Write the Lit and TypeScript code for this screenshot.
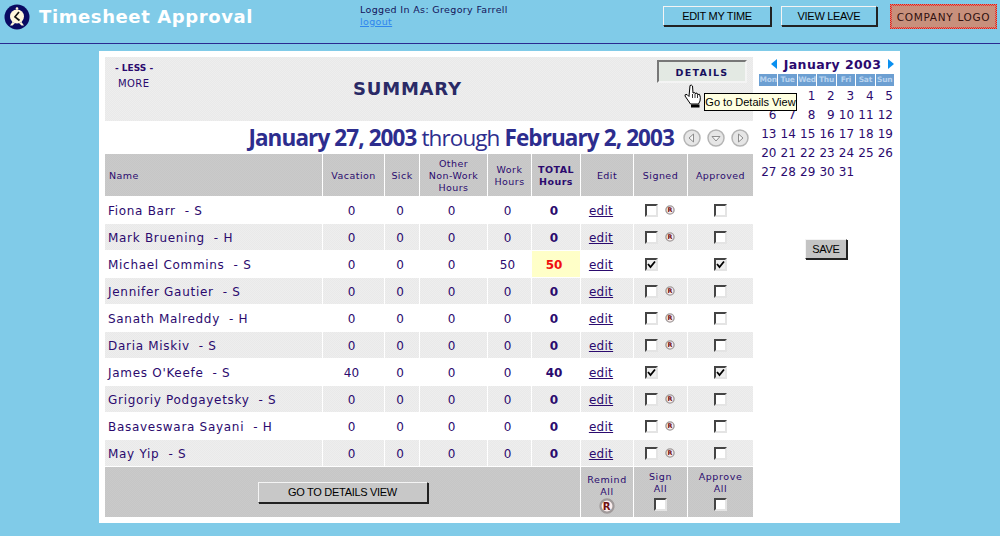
import { LitElement, html, css, svg } from "lit";
import { customElement } from "lit/decorators.js";

const rows = [
  { name: "Fiona Barr", t: "S", other: 0, work: 0, vac: 0, signed: false },
  { name: "Mark Bruening", t: "H", other: 0, work: 0, vac: 0, signed: false },
  { name: "Michael Commins", t: "S", other: 0, work: 50, vac: 0, signed: true, over: true },
  { name: "Jennifer Gautier", t: "S", other: 0, work: 0, vac: 0, signed: false },
  { name: "Sanath Malreddy", t: "H", other: 0, work: 0, vac: 0, signed: false },
  { name: "Daria Miskiv", t: "S", other: 0, work: 0, vac: 0, signed: false },
  { name: "James O'Keefe", t: "S", other: 0, work: 0, vac: 40, signed: true },
  { name: "Grigoriy Podgayetsky", t: "S", other: 0, work: 0, vac: 0, signed: false },
  { name: "Basaveswara Sayani", t: "H", other: 0, work: 0, vac: 0, signed: false },
  { name: "May Yip", t: "S", other: 0, work: 0, vac: 0, signed: false },
];

const weekdays = ["Mon", "Tue", "Wed", "Thu", "Fri", "Sat", "Sun"];
const days = [0, 0, ...Array.from({ length: 31 }, (_, i) => i + 1)];

const clock = svg`<svg width="26" height="26" viewBox="0 0 26 26">
  <circle cx="13" cy="13" r="12.500" fill="#0a0a62"/>
  <circle cx="13" cy="4.500" r="1.300" fill="#fff6dc"/>
  <path d="M8.500 18 L6 21.500 h2.500 L11 19z M17.500 18 L20 21.500 h-2.500 L15 19z" fill="#fff6dc"/>
  <circle cx="13" cy="12.500" r="7" fill="#fff6dc"/>
  <path d="M15 8 l-4 4.800 l4.500 3.700" fill="none" stroke="#111" stroke-width="1.700"/>
</svg>`;

const hand = svg`<svg width="20" height="24" viewBox="0 0 20 24">
  <path d="M7 1.500 q1.500 -1 2.500 .5 l.5 7 l1.500 -.5 l.5 1 l2 -.5 l.5 1.500 l2 -.2 q1.500 3 .5 6.700 l-1.500 3 h-8 l-5.500 -8 q-.5 -2 2 -1.500 l2 2z" fill="#fff" stroke="#000" stroke-width="1"/>
  <path d="M9.500 10v4M12 10v4M14.500 11v3" stroke="#000" stroke-width=".8"/>
  <rect x="8" y="20.500" width="8.500" height="3" fill="#000"/>
</svg>`;

const check = svg`<svg class="tick" width="9" height="9" viewBox="0 0 9 9"><path d="M1 4 l2.500 3 L8 1.500" fill="none" stroke="#000" stroke-width="1.800"/></svg>`;

@customElement("app-root")
export class AppRoot extends LitElement {
  static styles = css`
    :host {
      display: block;
      width: 1000px;
      height: 536px;
      overflow: hidden;
      background: #80cbe8;
      font-family: "DejaVu Sans", Verdana, sans-serif;
      color: #2b0a6e;
    }
    * { box-sizing: border-box; }
    .top {
      display: flex;
      height: 44px;
      border-bottom: 1px solid #2a2a90;
      padding: 4px 1px 0 4px;
    }
    .logo { width: 26px; height: 26px; }
    .app-name {
      width: 321px;
      margin: 0 0 0 9px;
      color: #fff;
      font-size: 18px;
      font-weight: bold;
      line-height: 26px;
      letter-spacing: 0.6px;
    }
    .who {
      width: 303px;
      font-size: 9.5px;
      line-height: 12px;
      letter-spacing: 0.35px;
      color: #14145a;
    }
    .who a { display: block; color: #2f86ee; text-decoration: underline; }
    .btn {
      display: flex;
      align-items: center;
      justify-content: center;
      font-family: "Liberation Sans", Arial, sans-serif;
      font-size: 11px;
      letter-spacing: -0.3px;
      color: #000;
      background: #80cbe8;
      border: 1px solid;
      border-color: #f4f4f4 #222 #222 #f4f4f4;
      box-shadow: 1px 1px 0 #222;
    }
    .edit-time { width: 108px; height: 20px; margin: 2px 10px 0 0; }
    .view-leave { width: 96px; height: 20px; margin: 2px 13px 0 0; }
    .company {
      width: 107px;
      height: 25px;
      font-family: "DejaVu Sans", sans-serif;
      font-size: 10.5px;
      letter-spacing: 0.7px;
      color: #301010;
      background: #c8907c;
      border: 1px dotted #f01010;
      outline: 1px dotted #e83030;
      outline-offset: -2px;
      box-shadow: none;
    }
    .sheet {
      display: flex;
      gap: 6px;
      width: 801px;
      height: 472px;
      margin: 7px 0 0 99px;
      padding: 6px 0 0 6px;
      background: #fff;
    }
    .left { width: 648px; }
    .dither {
      background: repeating-conic-gradient(#e9e9e9 0 25%, #eeeeee 0 50%) 0 0 / 2px 2px;
    }
    .shade {
      background: repeating-conic-gradient(#c6c6c6 0 25%, #cacaca 0 50%) 0 0 / 2px 2px;
    }
    .summary {
      position: relative;
      display: grid;
      grid-template-columns: 252px 1fr 96px;
      height: 64px;
    }
    .modes {
      padding: 3px 0 0 10px;
      font-size: 10px;
      line-height: 16px;
    }
    .modes b { display: block; font-size: 9px; }
    .modes span { padding-left: 3px; letter-spacing: 0.4px; }
    h2 {
      margin: 22px 0 0 -4px;
      font-size: 18px;
      line-height: 20px;
      letter-spacing: 0.8px;
      color: #2a2a66;
    }
    .details {
      width: 90px;
      height: 23px;
      margin-top: 3px;
      padding-top: 2px;
      display: flex;
      align-items: center;
      justify-content: center;
      font-size: 9.5px;
      font-weight: bold;
      letter-spacing: 1.3px;
      color: #17105e;
      background: #e3e9e3;
      border: 2px solid;
      border-color: #777 #f4f4f4 #f4f4f4 #777;
    }
    .hand { position: absolute; left: 578px; top: 27px; }
    .tip {
      position: absolute;
      left: 599px;
      top: 36px;
      z-index: 2;
      width: 93px;
      height: 18px;
      border: 1px solid #000;
      background: #ffffe1;
      color: #000;
      font-family: "Liberation Sans", Arial, sans-serif;
      font-size: 11px;
      line-height: 16px;
      white-space: nowrap;
      text-align: center;
    }
    .range {
      display: flex;
      align-items: center;
      justify-content: flex-end;
      height: 33px;
      padding-right: 4px;
      gap: 9px;
    }
    .range p {
      margin: 0;
      font-family: "Open Sans", sans-serif;
      font-size: 22.5px;
      letter-spacing: -0.9px;
      white-space: nowrap;
      color: #2d2d8e;
    }
    .range b { font-weight: 700; }
    .nav { display: flex; gap: 6px; }
    .row {
      display: grid;
      grid-template-columns: 217px 61px 34px 67px 43px 48px 52px 53px 65px;
      column-gap: 1px;
      height: 26px;
      margin-bottom: 1px;
    }
    .row > div {
      display: flex;
      align-items: center;
      justify-content: center;
      padding: 2px 4px 0 0;
      font-size: 12px;
    }
    .row.head { height: 42px; }
    .row.head > div {
      padding: 2px 0 0;
      font-size: 9.5px;
      line-height: 12px;
      letter-spacing: 0.45px;
      text-align: center;
    }
    .row > .name { justify-content: flex-start; padding-left: 3px; white-space: pre; letter-spacing: 0.7px; }
    .row.head > .name { padding-left: 4px; letter-spacing: 0.45px; }
    .row .total { font-weight: bold; }
    .row .total.over { background: #ffffc8; color: #f01010; }
    .row > .edit { padding-right: 12px; }
    .row a { color: #2b0a6e; text-decoration: underline; font-size: 12px; letter-spacing: 0.3px; }
    .row > .signed { justify-content: flex-start; padding: 0 0 0 11px; gap: 7px; }
    .row > .approve { padding: 0; }
    .box {
      display: inline-flex;
      align-items: center;
      justify-content: center;
      width: 13px;
      height: 13px;
      background: #fff;
      border: 2px solid;
      border-color: #444 #e4e4e4 #e4e4e4 #444;
    }
    .box.on { background: #efefef; }
    .foot {
      display: grid;
      grid-template-columns: 475px 52px 53px 65px;
      column-gap: 1px;
      height: 50px;
    }
    .foot > div {
      display: flex;
      flex-direction: column;
      align-items: center;
      justify-content: center;
      font-size: 9.5px;
      line-height: 12px;
      letter-spacing: 0.6px;
      text-align: center;
    }
    .foot > .remind { padding-top: 3px; }
    .goto { width: 170px; height: 21px; background: #c8c8c8; }
    .foot .box { margin-top: 3px; }
    .foot > div:nth-child(n + 3) { padding-bottom: 2px; }
    .side { width: 136px; }
    .cal-title {
      display: flex;
      align-items: center;
      justify-content: space-between;
      width: 135px;
      height: 16px;
      margin-top: -1px;
      padding: 0 0 0 12px;
      font-size: 12.5px;
      font-weight: bold;
      letter-spacing: 0.4px;
      color: #2b0a6e;
      white-space: nowrap;
    }
    .arrow {
      width: 0;
      height: 0;
      border-top: 5px solid transparent;
      border-bottom: 5px solid transparent;
    }
    .arrow.prev { border-right: 6px solid #0a90f0; }
    .arrow.next { border-left: 6px solid #0a90f0; }
    .cal {
      display: grid;
      grid-template-columns: repeat(7, 1fr);
      column-gap: 1px;
      width: 135px;
      margin-top: 2px;
    }
    .cal .wd {
      height: 12px;
      margin-bottom: 1px;
      background: #6c9fd2;
      color: #b9d3ee;
      font-size: 7.5px;
      font-weight: bold;
      letter-spacing: -0.2px;
      line-height: 12px;
      text-align: center;
      white-space: nowrap;
    }
    .cal .d {
      height: 19px;
      padding-right: 1px;
      font-size: 12px;
      line-height: 19px;
      text-align: right;
    }
    .save {
      width: 42px;
      height: 20px;
      margin: 57px 0 0 46px;
      background: #c4c4c4;
    }
  `;

  remind(size: number) {
    return svg`<svg width=${size} height=${size} viewBox="0 0 11 11">
      <circle cx="5.500" cy="5.500" r="4.500" fill="#fbeeee" stroke="#a09a9a" stroke-width="1.500"/>
      <text x="5.500" y="8" text-anchor="middle" font-size="7" font-weight="bold" font-family="DejaVu Sans" fill="#701010">R</text>
    </svg>`;
  }

  navIcon(kind: string) {
    const d =
      kind === "prev" ? "M10.500 5 L6 9 L10.500 13z" :
      kind === "next" ? "M7.500 5 L12 9 L7.500 13z" :
      "M5 7.500 L9 12 L13 7.500z";
    return svg`<svg width="18" height="18" viewBox="0 0 18 18">
      <circle cx="9" cy="9" r="8" fill="#e6e6e6" stroke="#b4b4b4" stroke-width="1.500"/>
      <path d=${d} fill="#f6f6f6" stroke="#8c8c8c"/>
    </svg>`;
  }

  renderRow(r: (typeof rows)[number], i: number) {
    const cell = i % 2 ? "dither" : "";
    const total = r.vac + r.other + r.work;
    return html`<div class="row">
      <div class="name ${cell}">${r.name}  - ${r.t}</div>
      <div class=${cell}>${r.vac}</div>
      <div class=${cell}>0</div>
      <div class=${cell}>${r.other}</div>
      <div class=${cell}>${r.work}</div>
      <div class="total ${cell} ${r.over ? "over" : ""}">${total}</div>
      <div class="edit ${cell}"><a href="#">edit</a></div>
      <div class="signed ${cell}">
        <span class="box ${r.signed ? "on" : ""}">${r.signed ? check : ""}</span>
        ${r.signed ? "" : this.remind(10)}
      </div>
      <div class="approve ${cell}">
        <span class="box ${r.signed ? "on" : ""}">${r.signed ? check : ""}</span>
      </div>
    </div>`;
  }

  render() {
    return html`
      <header class="top">
        <div class="logo">${clock}</div>
        <h1 class="app-name">Timesheet Approval</h1>
        <div class="who">Logged In As: Gregory Farrell<a href="#">logout</a></div>
        <div class="btn edit-time">EDIT MY TIME</div>
        <div class="btn view-leave">VIEW LEAVE</div>
        <div class="btn company">COMPANY LOGO</div>
      </header>
      <div class="sheet">
        <div class="left">
          <div class="summary dither">
            <div class="modes"><b>- LESS -</b><span>MORE</span></div>
            <h2>SUMMARY</h2>
            <div class="details">DETAILS</div>
            <div class="hand">${hand}</div>
            <div class="tip">Go to Details View</div>
          </div>
          <div class="range">
            <p><b>January 27, 2003</b> through <b>February 2, 2003</b></p>
            <div class="nav">${this.navIcon("prev")}${this.navIcon("down")}${this.navIcon("next")}</div>
          </div>
          <div class="row head">
            <div class="name shade">Name</div>
            <div class="shade">Vacation</div>
            <div class="shade">Sick</div>
            <div class="shade">Other<br />Non-Work<br />Hours</div>
            <div class="shade">Work<br />Hours</div>
            <div class="shade"><b>TOTAL<br />Hours</b></div>
            <div class="shade">Edit</div>
            <div class="shade">Signed</div>
            <div class="shade">Approved</div>
          </div>
          ${rows.map((r, i) => this.renderRow(r, i))}
          <div class="foot">
            <div class="shade"><div class="btn goto">GO TO DETAILS VIEW</div></div>
            <div class="remind shade">Remind<br />All${this.remind(16)}</div>
            <div class="shade">Sign<br />All<span class="box"></span></div>
            <div class="shade">Approve<br />All<span class="box"></span></div>
          </div>
        </div>
        <aside class="side">
          <div class="cal-title">
            <span class="arrow prev"></span>January 2003<span class="arrow next"></span>
          </div>
          <div class="cal">
            ${weekdays.map((w) => html`<div class="wd">${w}</div>`)}
            ${days.map((d) => html`<div class="d">${d || ""}</div>`)}
          </div>
          <div class="btn save">SAVE</div>
        </aside>
      </div>
    `;
  }
}
